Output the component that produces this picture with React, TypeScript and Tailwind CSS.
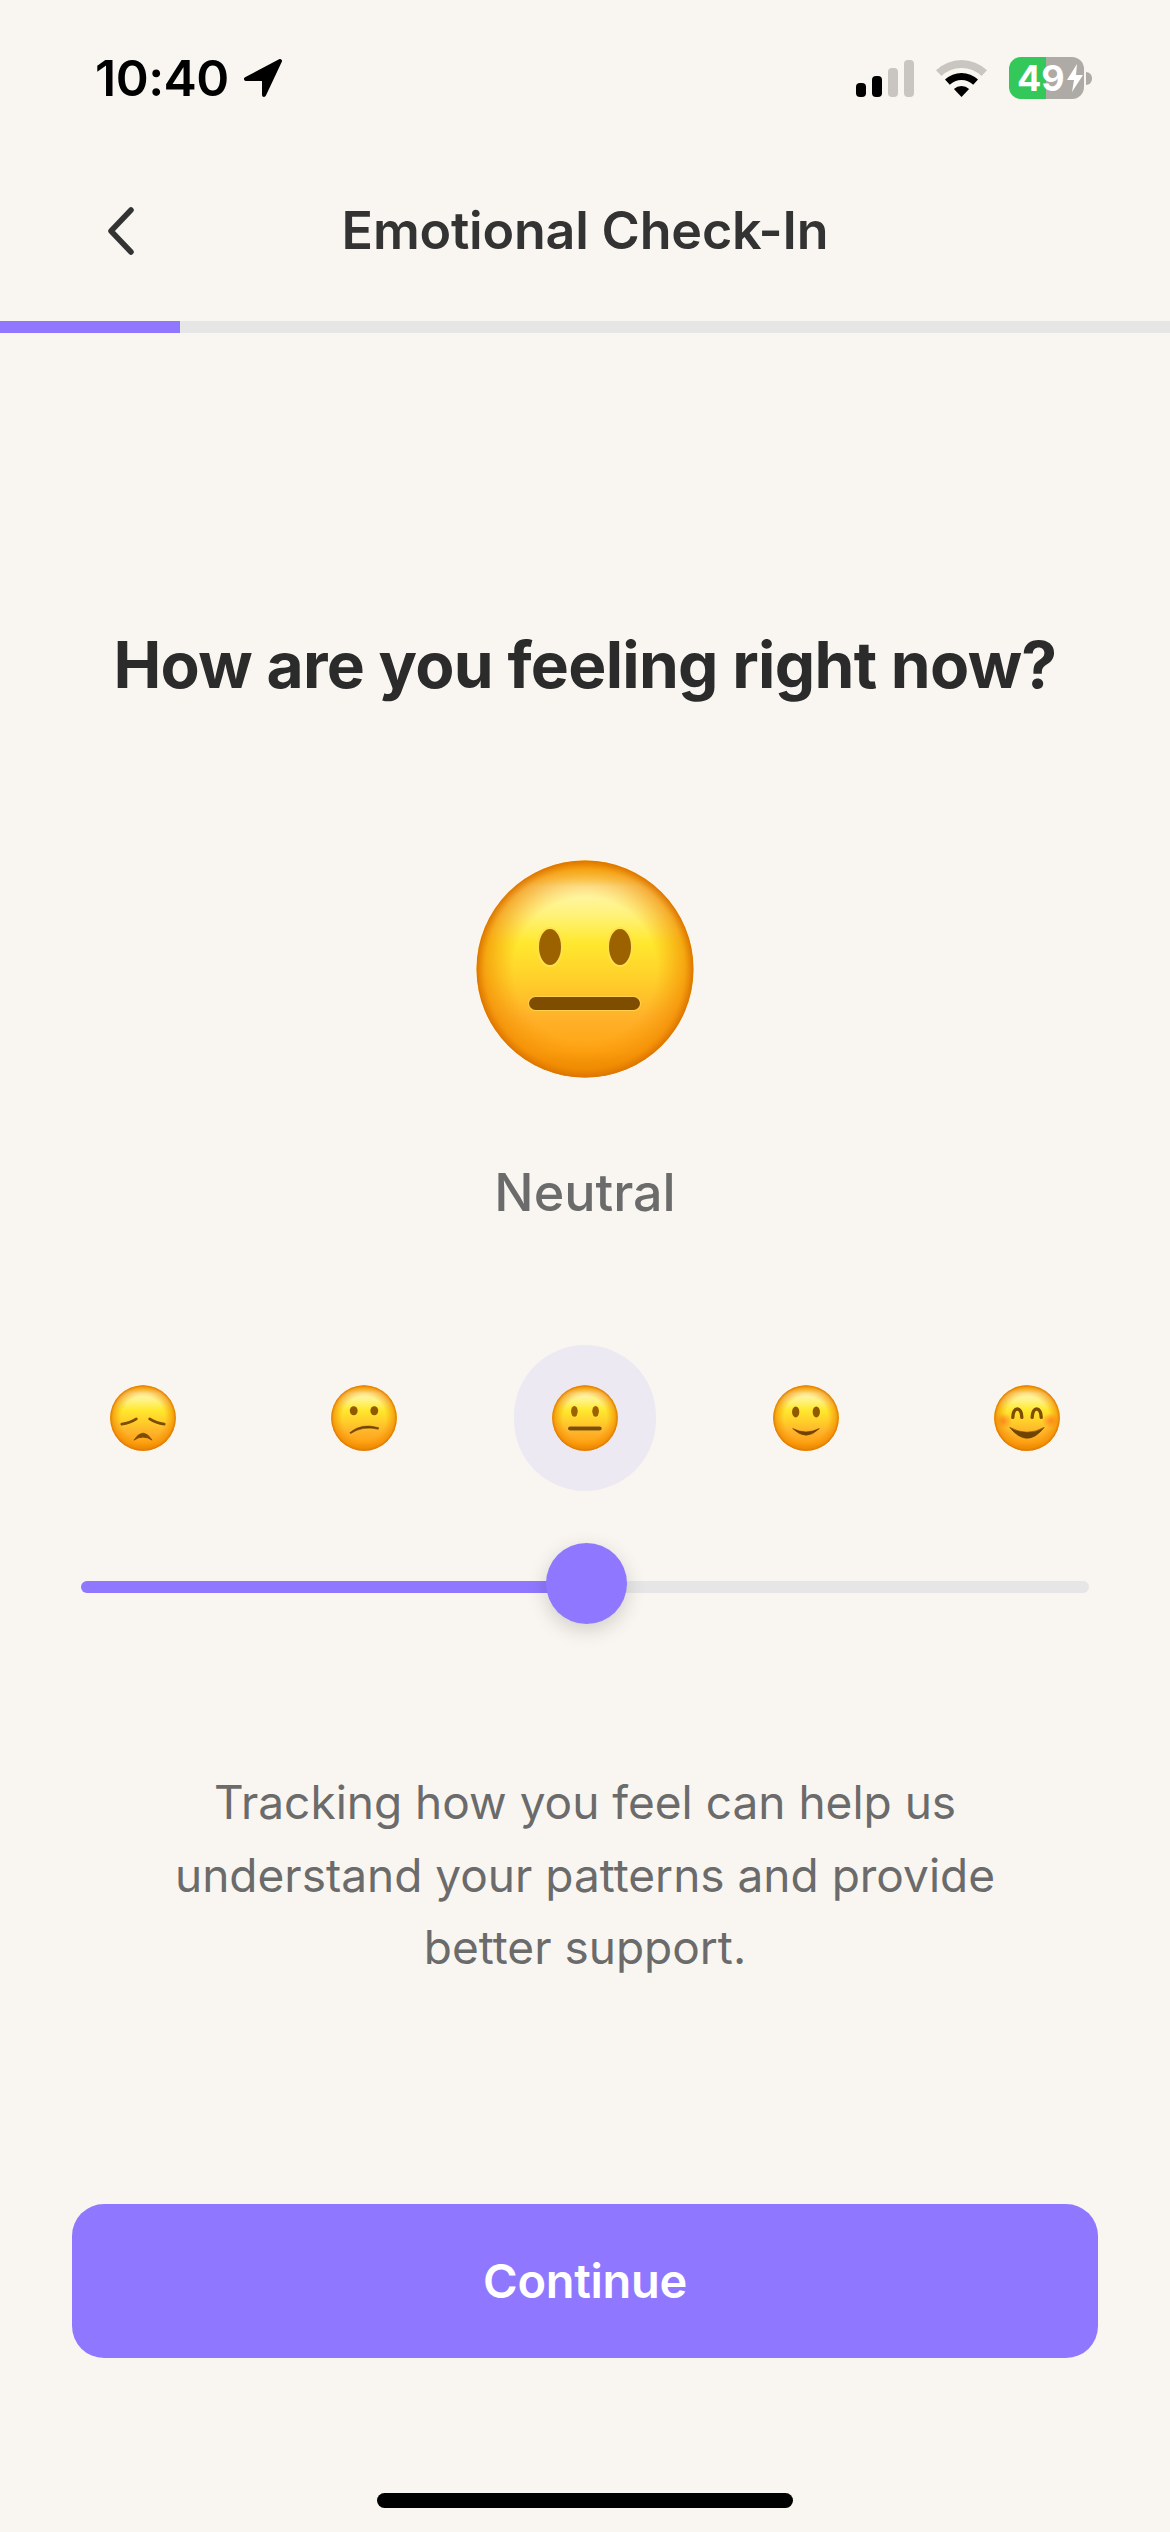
import { useId } from "react";

type Mood = "sad" | "confused" | "neutral" | "smile" | "happy";

const MOODS: Mood[] = ["sad", "confused", "neutral", "smile", "happy"];

function Features({ mood }: { mood: Mood }) {
  if (mood === "sad") {
    return (
      <g>
        <path d="M39 129 Q66 126 87 112" fill="none" stroke="#7d4c00" strokeWidth="9" strokeLinecap="round" />
        <path d="M131 112 Q152 126 179 129" fill="none" stroke="#7d4c00" strokeWidth="9" strokeLinecap="round" />
        <path d="M79 182 Q109 136 139 182 Q109 162 79 182 Z" fill="#7d4c00" stroke="#7d4c00" strokeWidth="3" strokeLinejoin="round" />
      </g>
    );
  }
  if (mood === "confused") {
    return (
      <g>
        <ellipse cx="75" cy="85" rx="13" ry="15" fill="#8f5a00" />
        <ellipse cx="143" cy="85" rx="13" ry="15" fill="#8f5a00" />
        <path d="M62 158 Q100 124 157 141 L156 146 Q105 134 65 160 Z" fill="#6f4300" stroke="#6f4300" strokeWidth="2" strokeLinejoin="round" />
      </g>
    );
  }
  if (mood === "smile") {
    return (
      <g>
        <ellipse cx="75" cy="89" rx="12" ry="18" fill="#8f5a00" />
        <ellipse cx="143" cy="89" rx="12" ry="18" fill="#8f5a00" />
        <path d="M65 144 Q109 166 153 144 Q109 188 65 144 Z" fill="#6f4300" stroke="#6f4300" strokeWidth="2" strokeLinejoin="round" />
      </g>
    );
  }
  if (mood === "happy") {
    return (
      <g>
        <path d="M62 107 C62 70 92 70 92 107" fill="none" stroke="#7d4c00" strokeWidth="11" strokeLinecap="round" />
        <path d="M126 107 C126 70 156 70 156 107" fill="none" stroke="#7d4c00" strokeWidth="11" strokeLinecap="round" />
        <path d="M52 140 Q109 172 166 140 Q109 212 52 140 Z" fill="#6f4300" stroke="#6f4300" strokeWidth="2" strokeLinejoin="round" />
      </g>
    );
  }
  return (
    <g>
      <ellipse cx="74" cy="87" rx="13" ry="20" fill="#ffe14a" />
      <ellipse cx="144" cy="87" rx="13" ry="20" fill="#ffe14a" />
      <ellipse cx="74" cy="87" rx="11" ry="18" fill="#9c6200" />
      <ellipse cx="144" cy="87" rx="11" ry="18" fill="#9c6200" />
      <rect x="52" y="136" width="113" height="15" rx="7.5" fill="#ffd24a" />
      <rect x="53" y="137" width="111" height="13" rx="6.5" fill="#7f4d00" />
    </g>
  );
}

function Face({ mood, className }: { mood: Mood; className: string }) {
  const id = useId();
  return (
    <svg viewBox="0 0 218 218" className={className}>
      <defs>
        <linearGradient id={`${id}base`} x1="0" y1="0" x2="0" y2="1">
          <stop offset="0" stopColor="#ffb400" />
          <stop offset="0.05" stopColor="#ffd84a" />
          <stop offset="0.12" stopColor="#fff6b0" />
          <stop offset="0.25" stopColor="#fff27a" />
          <stop offset="0.38" stopColor="#ffe82e" />
          <stop offset="0.55" stopColor="#ffcf2a" />
          <stop offset="0.72" stopColor="#ffb22a" />
          <stop offset="0.88" stopColor="#ffa415" />
          <stop offset="1" stopColor="#e88400" />
        </linearGradient>
        <radialGradient id={`${id}rim`} cx="0.5" cy="0.5" r="0.5">
          <stop offset="0.66" stopColor="#f59300" stopOpacity="0" />
          <stop offset="0.92" stopColor="#f08a00" stopOpacity="0.65" />
          <stop offset="1" stopColor="#dc7400" stopOpacity="1" />
        </radialGradient>
        <radialGradient id={`${id}blush`} cx="0.5" cy="0.5" r="0.5">
          <stop offset="0" stopColor="#ff6a1e" stopOpacity="0.7" />
          <stop offset="1" stopColor="#ff6a1e" stopOpacity="0" />
        </radialGradient>
      </defs>
      <circle cx="109" cy="109" r="108.5" fill={`url(#${id}base)`} />
      {mood === "happy" && (
        <g>
          <ellipse cx="30" cy="118" rx="30" ry="26" fill={`url(#${id}blush)`} />
          <ellipse cx="188" cy="118" rx="30" ry="26" fill={`url(#${id}blush)`} />
        </g>
      )}
      <circle cx="109" cy="109" r="108.5" fill={`url(#${id}rim)`} />
      <Features mood={mood} />
    </svg>
  );
}

function StatusBar() {
  return (
    <div className="h-[99px] pt-[57px] pl-[95px] pr-[78px] flex items-center justify-between">
      <div className="flex items-center gap-[14px]">
        <span className="text-[50px] leading-[42px] font-semibold text-black tracking-[-0.5px]">10:40</span>
        <svg viewBox="0 0 40 39" className="w-[40px] h-[39px]">
          <path d="M37 2 L3 20 L21 20 L21 36 Z" fill="#000" stroke="#000" strokeWidth="4" strokeLinejoin="round" />
        </svg>
      </div>
      <div className="flex items-center">
        <div className="flex items-end gap-[6px] h-[37px]">
          <div className="w-[10px] h-[14px] rounded-[4px] bg-black" />
          <div className="w-[10px] h-[21px] rounded-[4px] bg-black" />
          <div className="w-[10px] h-[29px] rounded-[4px] bg-[#c9c6c1]" />
          <div className="w-[10px] h-[37px] rounded-[4px] bg-[#c9c6c1]" />
        </div>
        <svg viewBox="0 0 51 37" className="w-[51px] h-[37px] ml-[22px]">
          <path d="M0 10.2 A37 37 0 0 1 51 10.2 L45.5 16 A29 29 0 0 0 5.5 16 Z" fill="#c9c6c1" />
          <path d="M9 19.6 A24 24 0 0 1 42 19.6 L37.2 24.7 A17 17 0 0 0 13.8 24.7 Z" fill="#000" />
          <path d="M25.5 37 L17.9 29 A11 11 0 0 1 33.1 29 Z" fill="#000" />
        </svg>
        <div className="flex items-center ml-[22px]">
          <div className="relative w-[75px] h-[42px] rounded-[12px] overflow-hidden flex">
            <div className="w-[37px] bg-[#34c85a]" />
            <div className="flex-1 bg-[#aeaaa6]" />
            <div className="absolute inset-0 pl-[8px] flex items-center">
              <span className="text-[36px] leading-none font-bold text-white">49</span>
              <svg viewBox="0 0 18 28" className="w-[18px] h-[28px] ml-[1px]">
                <path d="M11 0 L1 16 L8 16 L6 28 L17 11 L10 11 Z" fill="#fff" />
              </svg>
            </div>
          </div>
          <div className="w-[6px] h-[13px] ml-[2px] rounded-r-full bg-[#aeaaa6]" />
        </div>
      </div>
    </div>
  );
}

export default function App() {
  return (
    <div className="w-[1170px] h-[2532px] bg-[#f9f6f1] flex flex-col font-['Inter',sans-serif]">
      <StatusBar />

      {/* Header */}
      <div className="relative h-[234px] flex flex-col">
        <div className="flex-1 flex items-center justify-center pt-[42px]">
          <svg viewBox="0 0 27 48" className="absolute left-[107px] top-[108px] w-[27px] h-[48px]">
            <path d="M24 3 L4 24 L24 45" fill="none" stroke="#333333" strokeWidth="5.5" strokeLinecap="round" strokeLinejoin="round" />
          </svg>
          <h2 className="text-[52px] leading-[64px] font-semibold text-[#333333] tracking-[-0.2px]">Emotional Check-In</h2>
        </div>
        <div className="h-[12px] bg-[#e6e6e6]">
          <div className="w-[180px] h-full bg-[#8f78ff]" />
        </div>
      </div>

      {/* Main */}
      <div className="flex flex-col items-center pt-[290px]">
        <h1 className="text-[64px] leading-[84px] font-bold text-[#2b2b2b] tracking-[-0.7px]">How are you feeling right now?</h1>
        <Face mood="neutral" className="w-[218px] h-[218px] mt-[153px]" />
        <p className="mt-[82px] text-[52px] leading-[66px] font-medium text-[#6b6b6b]">Neutral</p>
      </div>

      {/* Mood row */}
      <div className="mt-[119px] mx-[72px] flex justify-between">
        {MOODS.map((m) => (
          <div
            key={m}
            className={`w-[142px] h-[146px] rounded-full flex items-center justify-center ${m === "neutral" ? "bg-[#ede9f2]" : ""}`}
          >
            <Face mood={m} className="w-[66px] h-[66px]" />
          </div>
        ))}
      </div>

      {/* Slider */}
      <div className="relative mt-[90px] mx-[81px] h-[12px] rounded-full bg-[#e6e6e6]">
        <div className="w-[506px] h-full rounded-full bg-[#8f78ff]" />
        <div className="absolute left-[465px] top-[-38px] w-[81px] h-[81px] rounded-full bg-[#8f78ff] shadow-[0_6px_20px_rgba(0,0,0,0.16)]" />
      </div>

      <p className="mt-[173px] mx-auto w-[900px] text-center text-[46px] leading-[72.5px] font-normal text-[#6b6b6b]">
        Tracking how you feel can help us understand your patterns and provide better support.
      </p>

      <div className="flex-1" />

      <button className="mx-[72px] h-[154px] rounded-[32px] bg-[#8f78ff] text-white text-[47px] font-semibold tracking-[-0.3px]">
        Continue
      </button>

      <div className="mt-[135px] mb-[24px] mx-auto w-[416px] h-[15px] rounded-full bg-black" />
    </div>
  );
}
